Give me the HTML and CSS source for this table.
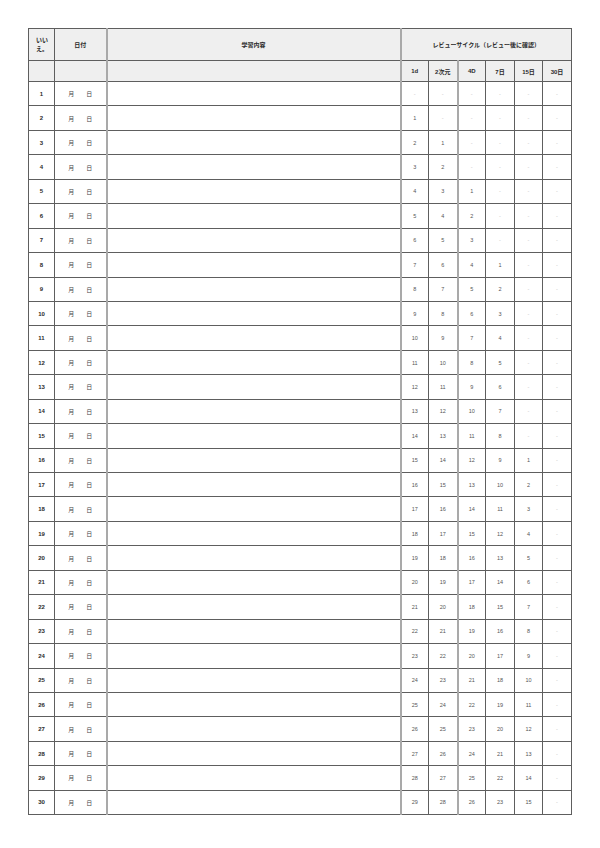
FILE: index.html
```html
<!DOCTYPE html>
<html lang="ja">
<head>
<meta charset="utf-8">
<title>学習記録</title>
<link rel="stylesheet" href="styles.css">
</head>
<body>
<table class="sheet">
  <colgroup>
    <col class="c-no"><col class="c-date"><col class="c-body">
    <col class="c-rv"><col class="c-rv2"><col class="c-rv"><col class="c-rv2"><col class="c-rv"><col class="c-rv2">
  </colgroup>
  <thead>
    <tr class="h1">
      <th class="left">いいえ。</th>
      <th>日付</th>
      <th class="soft-l">学習内容</th>
      <th class="soft-l" colspan="6">レビューサイクル（レビュー後に確認）</th>
    </tr>
    <tr class="h2">
      <th></th><th></th><th class="soft-l"></th>
      <th class="soft-l">1d</th><th>2次元</th><th class="soft-l">4D</th><th>7日</th><th class="soft-l2">15日</th><th>30日</th>
    </tr>
  </thead>
  <tbody>
    <tr><td class="no">1</td><td class="md">月&emsp;&emsp;日</td><td class="soft-l"></td><td class="n soft-l dash">-</td><td class="n dash">-</td><td class="n soft-l dash">-</td><td class="n dash">-</td><td class="n soft-l2 dash">-</td><td class="n dash">-</td></tr>
    <tr><td class="no">2</td><td class="md">月&emsp;&emsp;日</td><td class="soft-l"></td><td class="n soft-l">1</td><td class="n dash">-</td><td class="n soft-l dash">-</td><td class="n dash">-</td><td class="n soft-l2 dash">-</td><td class="n dash">-</td></tr>
    <tr><td class="no">3</td><td class="md">月&emsp;&emsp;日</td><td class="soft-l"></td><td class="n soft-l">2</td><td class="n">1</td><td class="n soft-l dash">-</td><td class="n dash">-</td><td class="n soft-l2 dash">-</td><td class="n dash">-</td></tr>
    <tr><td class="no">4</td><td class="md">月&emsp;&emsp;日</td><td class="soft-l"></td><td class="n soft-l">3</td><td class="n">2</td><td class="n soft-l dash">-</td><td class="n dash">-</td><td class="n soft-l2 dash">-</td><td class="n dash">-</td></tr>
    <tr><td class="no">5</td><td class="md">月&emsp;&emsp;日</td><td class="soft-l"></td><td class="n soft-l">4</td><td class="n">3</td><td class="n soft-l">1</td><td class="n dash">-</td><td class="n soft-l2 dash">-</td><td class="n dash">-</td></tr>
    <tr><td class="no">6</td><td class="md">月&emsp;&emsp;日</td><td class="soft-l"></td><td class="n soft-l">5</td><td class="n">4</td><td class="n soft-l">2</td><td class="n dash">-</td><td class="n soft-l2 dash">-</td><td class="n dash">-</td></tr>
    <tr><td class="no">7</td><td class="md">月&emsp;&emsp;日</td><td class="soft-l"></td><td class="n soft-l">6</td><td class="n">5</td><td class="n soft-l">3</td><td class="n dash">-</td><td class="n soft-l2 dash">-</td><td class="n dash">-</td></tr>
    <tr><td class="no">8</td><td class="md">月&emsp;&emsp;日</td><td class="soft-l"></td><td class="n soft-l">7</td><td class="n">6</td><td class="n soft-l">4</td><td class="n">1</td><td class="n soft-l2 dash">-</td><td class="n dash">-</td></tr>
    <tr><td class="no">9</td><td class="md">月&emsp;&emsp;日</td><td class="soft-l"></td><td class="n soft-l">8</td><td class="n">7</td><td class="n soft-l">5</td><td class="n">2</td><td class="n soft-l2 dash">-</td><td class="n dash">-</td></tr>
    <tr><td class="no">10</td><td class="md">月&emsp;&emsp;日</td><td class="soft-l"></td><td class="n soft-l">9</td><td class="n">8</td><td class="n soft-l">6</td><td class="n">3</td><td class="n soft-l2 dash">-</td><td class="n dash">-</td></tr>
    <tr><td class="no">11</td><td class="md">月&emsp;&emsp;日</td><td class="soft-l"></td><td class="n soft-l">10</td><td class="n">9</td><td class="n soft-l">7</td><td class="n">4</td><td class="n soft-l2 dash">-</td><td class="n dash">-</td></tr>
    <tr><td class="no">12</td><td class="md">月&emsp;&emsp;日</td><td class="soft-l"></td><td class="n soft-l">11</td><td class="n">10</td><td class="n soft-l">8</td><td class="n">5</td><td class="n soft-l2 dash">-</td><td class="n dash">-</td></tr>
    <tr><td class="no">13</td><td class="md">月&emsp;&emsp;日</td><td class="soft-l"></td><td class="n soft-l">12</td><td class="n">11</td><td class="n soft-l">9</td><td class="n">6</td><td class="n soft-l2 dash">-</td><td class="n dash">-</td></tr>
    <tr><td class="no">14</td><td class="md">月&emsp;&emsp;日</td><td class="soft-l"></td><td class="n soft-l">13</td><td class="n">12</td><td class="n soft-l">10</td><td class="n">7</td><td class="n soft-l2 dash">-</td><td class="n dash">-</td></tr>
    <tr><td class="no">15</td><td class="md">月&emsp;&emsp;日</td><td class="soft-l"></td><td class="n soft-l">14</td><td class="n">13</td><td class="n soft-l">11</td><td class="n">8</td><td class="n soft-l2 dash">-</td><td class="n dash">-</td></tr>
    <tr><td class="no">16</td><td class="md">月&emsp;&emsp;日</td><td class="soft-l"></td><td class="n soft-l">15</td><td class="n">14</td><td class="n soft-l">12</td><td class="n">9</td><td class="n soft-l2">1</td><td class="n dash">-</td></tr>
    <tr><td class="no">17</td><td class="md">月&emsp;&emsp;日</td><td class="soft-l"></td><td class="n soft-l">16</td><td class="n">15</td><td class="n soft-l">13</td><td class="n">10</td><td class="n soft-l2">2</td><td class="n dash">-</td></tr>
    <tr><td class="no">18</td><td class="md">月&emsp;&emsp;日</td><td class="soft-l"></td><td class="n soft-l">17</td><td class="n">16</td><td class="n soft-l">14</td><td class="n">11</td><td class="n soft-l2">3</td><td class="n dash">-</td></tr>
    <tr><td class="no">19</td><td class="md">月&emsp;&emsp;日</td><td class="soft-l"></td><td class="n soft-l">18</td><td class="n">17</td><td class="n soft-l">15</td><td class="n">12</td><td class="n soft-l2">4</td><td class="n dash">-</td></tr>
    <tr><td class="no">20</td><td class="md">月&emsp;&emsp;日</td><td class="soft-l"></td><td class="n soft-l">19</td><td class="n">18</td><td class="n soft-l">16</td><td class="n">13</td><td class="n soft-l2">5</td><td class="n dash">-</td></tr>
    <tr><td class="no">21</td><td class="md">月&emsp;&emsp;日</td><td class="soft-l"></td><td class="n soft-l">20</td><td class="n">19</td><td class="n soft-l">17</td><td class="n">14</td><td class="n soft-l2">6</td><td class="n dash">-</td></tr>
    <tr><td class="no">22</td><td class="md">月&emsp;&emsp;日</td><td class="soft-l"></td><td class="n soft-l">21</td><td class="n">20</td><td class="n soft-l">18</td><td class="n">15</td><td class="n soft-l2">7</td><td class="n dash">-</td></tr>
    <tr><td class="no">23</td><td class="md">月&emsp;&emsp;日</td><td class="soft-l"></td><td class="n soft-l">22</td><td class="n">21</td><td class="n soft-l">19</td><td class="n">16</td><td class="n soft-l2">8</td><td class="n dash">-</td></tr>
    <tr><td class="no">24</td><td class="md">月&emsp;&emsp;日</td><td class="soft-l"></td><td class="n soft-l">23</td><td class="n">22</td><td class="n soft-l">20</td><td class="n">17</td><td class="n soft-l2">9</td><td class="n dash">-</td></tr>
    <tr><td class="no">25</td><td class="md">月&emsp;&emsp;日</td><td class="soft-l"></td><td class="n soft-l">24</td><td class="n">23</td><td class="n soft-l">21</td><td class="n">18</td><td class="n soft-l2">10</td><td class="n dash">-</td></tr>
    <tr><td class="no">26</td><td class="md">月&emsp;&emsp;日</td><td class="soft-l"></td><td class="n soft-l">25</td><td class="n">24</td><td class="n soft-l">22</td><td class="n">19</td><td class="n soft-l2">11</td><td class="n dash">-</td></tr>
    <tr><td class="no">27</td><td class="md">月&emsp;&emsp;日</td><td class="soft-l"></td><td class="n soft-l">26</td><td class="n">25</td><td class="n soft-l">23</td><td class="n">20</td><td class="n soft-l2">12</td><td class="n dash">-</td></tr>
    <tr><td class="no">28</td><td class="md">月&emsp;&emsp;日</td><td class="soft-l"></td><td class="n soft-l">27</td><td class="n">26</td><td class="n soft-l">24</td><td class="n">21</td><td class="n soft-l2">13</td><td class="n dash">-</td></tr>
    <tr><td class="no">29</td><td class="md">月&emsp;&emsp;日</td><td class="soft-l"></td><td class="n soft-l">28</td><td class="n">27</td><td class="n soft-l">25</td><td class="n">22</td><td class="n soft-l2">14</td><td class="n dash">-</td></tr>
    <tr><td class="no">30</td><td class="md">月&emsp;&emsp;日</td><td class="soft-l"></td><td class="n soft-l">29</td><td class="n">28</td><td class="n soft-l">26</td><td class="n">23</td><td class="n soft-l2">15</td><td class="n dash">-</td></tr>
  </tbody>
</table>
</body>
</html>
```
FILE: styles.css
```css
html, body {
  margin: 0;
  padding: 0;
  background: #ffffff;
}

body {
  padding: 28px 0 0 28px;
  font-family: "Liberation Sans", "Noto Sans CJK JP", sans-serif;
  color: #333333;
}

.sheet {
  border-collapse: collapse;
  table-layout: fixed;
  width: 544px;
}

.c-no { width: 26px; }
.c-date { width: 52px; }
.c-body { width: 294px; }
.c-rv { width: 28px; }
.c-rv2 { width: 29px; }

.sheet th,
.sheet td {
  border: 1px solid #5e5e5e;
  padding: 0;
  text-align: center;
  vertical-align: middle;
  overflow: hidden;
  white-space: nowrap;
}

.sheet th {
  background: #efefef;
  font-size: 6px;
  font-weight: 700;
  color: #2a2a2a;
}

.sheet .h1 th {
  height: 31px;
}

.sheet .h2 th {
  height: 20px;
}

.sheet th.left {
  text-align: left;
  padding-left: 7px;
  white-space: normal;
  line-height: 9px;
  word-break: break-all;
}

.sheet td {
  height: 23.45px;
  font-size: 5.5px;
}

.sheet td.no {
  font-weight: 700;
  font-size: 6px;
  color: #2a2a2a;
}

.sheet td.md {
  font-size: 6px;
  color: #444444;
}

.sheet td.n {
  color: #555555;
}

.sheet td.dash {
  color: #c4c4c4;
}

.sheet .soft-l {
  border-left: 2px solid #a9a9a9;
}

.sheet .soft-l2 {
  border-left: 1px solid #9a9a9a;
}
```
